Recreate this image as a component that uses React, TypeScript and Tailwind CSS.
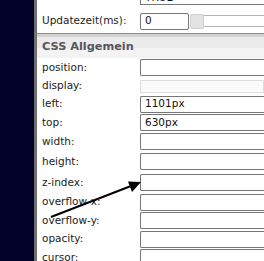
const FONT = "font-['DejaVu_Sans',Verdana,sans-serif]";

type Row = { label: string; value?: string; h: number; disabled?: boolean };

const ROWS: Row[] = [
  { label: "position:", h: 19 },
  { label: "display:", h: 18, disabled: true },
  { label: "left:", value: "1101px", h: 18 },
  { label: "top:", value: "630px", h: 19 },
  { label: "width:", h: 19 },
  { label: "height:", h: 21 },
  { label: "z-index:", h: 21 },
  { label: "overflow-x:", h: 18 },
  { label: "overflow-y:", h: 19 },
  { label: "opacity:", h: 18 },
  { label: "cursor:", h: 19 },
];

function Field({ value, disabled }: { value?: string; disabled?: boolean }) {
  if (disabled) {
    return <div className="h-[13px] flex-1 border border-[#dedede] bg-[#fafafa]" />;
  }
  return (
    <div className="flex h-[17px] flex-1 items-center rounded-l-[2px] border border-r-0 border-[#767676] bg-white pl-[4px] text-[10.5px] text-[#111]">
      {value}
    </div>
  );
}

export default function App() {
  return (
    <div className={`relative flex h-[261px] w-[264px] overflow-hidden bg-white ${FONT}`}>
      <div className="w-[34px] shrink-0 bg-[#03032a]" />
      <div className="w-[3px] shrink-0 bg-[#6f6f6f]" />

      <div className="flex-1 overflow-hidden">
        {/* TRUE field, scrolled mostly out of view */}
        <div className="-mt-[12px] flex h-[17px] items-end">
          <div className="w-[103px] shrink-0" />
          <div className="flex h-[17px] flex-1 items-end border border-r-0 border-[#767676] pl-[4px] text-[10.5px] leading-[13px] text-[#111]">
            TRUE
          </div>
        </div>

        {/* update interval */}
        <div className="mt-[7px] flex h-[18px] items-center">
          <span className="w-[103px] shrink-0 pl-[5px] text-[10.5px] text-[#222]">Updatezeit(ms):</span>
          <div className="flex h-[17px] w-[49px] items-center rounded-[2px] border border-[#767676] pl-[4px] text-[10.5px] text-[#111]">
            0
          </div>
          <div className="relative ml-[1px] flex h-[17px] flex-1 items-center">
            <div className="h-[12px] w-full border-y border-[#b4b4b4] bg-white" />
            <div className="absolute left-0 top-[1px] h-[15px] w-[14px] rounded-[2px] border border-[#cfcfcf] bg-[#e3e3e3]" />
          </div>
        </div>

        {/* section header */}
        <div className="mt-[3px] h-[4px] border-t border-[#8c8c8c] bg-[#d2d2d2]" />
        <div className="flex h-[21px] items-center bg-[linear-gradient(#ebebeb_0%,#ebebeb_50%,#f3f3f3_50%,#f3f3f3_100%)] pl-[5px] text-[11.3px] font-bold text-[#555560]">
          CSS Allgemein
        </div>

        {ROWS.map((r) => (
          <div key={r.label} className="flex items-center" style={{ height: r.h }}>
            <span className="w-[103px] shrink-0 pl-[5px] text-[10.5px] text-[#222]">{r.label}</span>
            <Field value={r.value} disabled={r.disabled} />
          </div>
        ))}
      </div>

      {/* annotation arrow */}
      <svg className="pointer-events-none absolute left-0 top-0" width="264" height="261" aria-hidden="true">
        <line x1="51" y1="217" x2="131" y2="186" stroke="#000" strokeWidth="2" />
        <polygon points="141,182 128,181.6 132,192" fill="#000" />
      </svg>
    </div>
  );
}
